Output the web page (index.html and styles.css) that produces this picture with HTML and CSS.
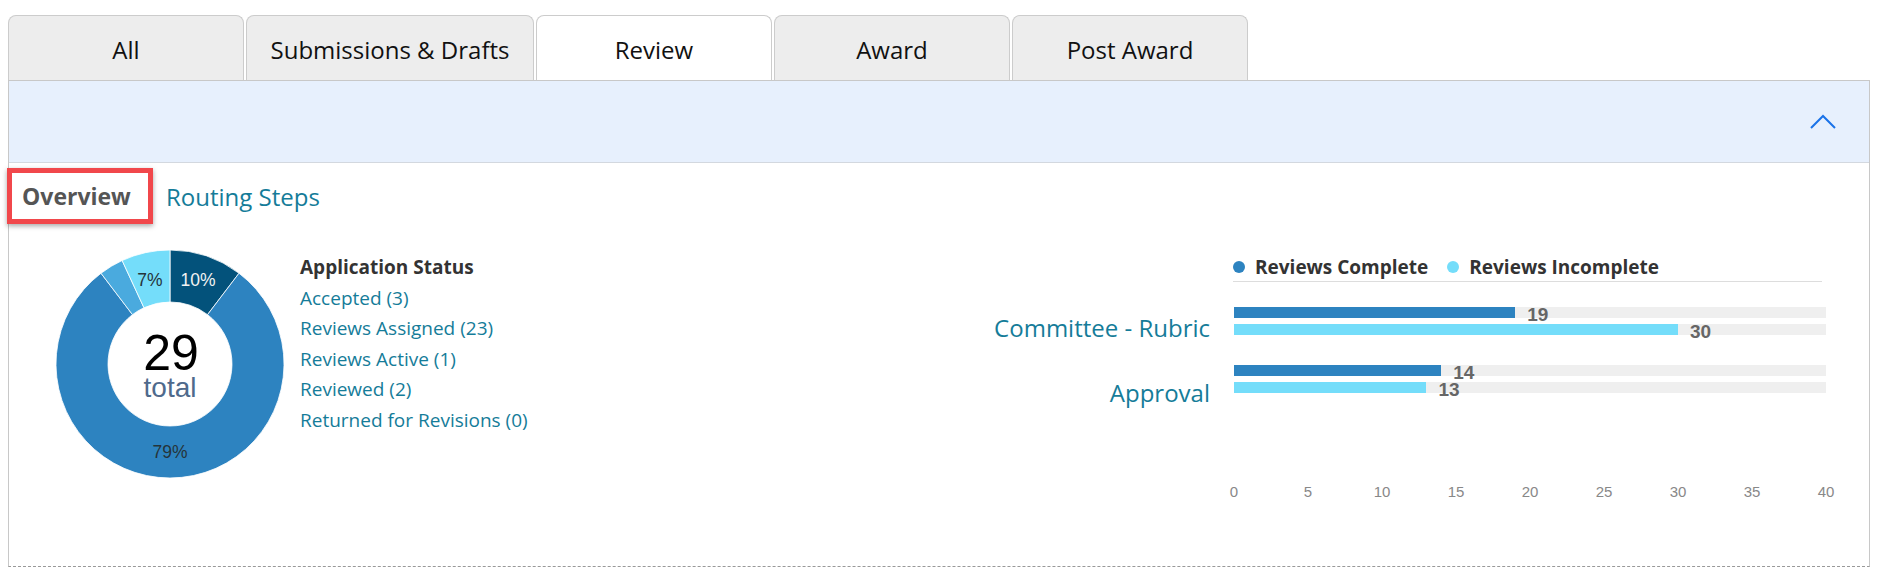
FILE: index.html
```html
<!DOCTYPE html>
<html lang="en">
<head>
<meta charset="utf-8">
<title>Review Overview</title>
<link rel="stylesheet" href="styles.css">
</head>
<body>
<div class="page">
  <nav class="tabs">
    <div class="tab">All</div>
    <div class="tab tab-wide">Submissions &amp; Drafts</div>
    <div class="tab tab-active">Review</div>
    <div class="tab">Award</div>
    <div class="tab">Post Award</div>
  </nav>
  <section class="panel">
    <header class="panel-head">
      <span class="collapse">
        <svg width="26" height="15" viewBox="0 0 26 15"><polyline points="1,14 13,2 25,14" fill="none" stroke="#1a73e8" stroke-width="2"/></svg>
      </span>
    </header>
    <div class="panel-body">
      <div class="subnav">
        <span class="subtab subtab-active">Overview</span>
        <span class="subtab">Routing Steps</span>
      </div>
      <div class="overview">
        <div class="donut">
          <svg width="228" height="228" viewBox="0 0 228 228">
            <g stroke="#ffffff" stroke-width="0.8">
              <path fill="#03527b" d="M114,0 A114,114 0 0 1 183.0,23.24 L151.52,64.64 A62,62 0 0 0 114,52 Z"/>
              <path fill="#2d83c0" d="M183.0,23.24 A114,114 0 1 1 45.0,23.24 L76.48,64.64 A62,62 0 1 0 151.52,64.64 Z"/>
              <path fill="#4aaade" d="M45.0,23.24 A114,114 0 0 1 66.13,10.53 L87.97,57.73 A62,62 0 0 0 76.48,64.64 Z"/>
              <path fill="#74ddfa" d="M66.13,10.53 A114,114 0 0 1 114,0 L114,52 A62,62 0 0 0 87.97,57.73 Z"/>
            </g>
            <text class="slice-label slice-light" x="142" y="36" text-anchor="middle">10%</text>
            <text class="slice-label" x="94" y="36" text-anchor="middle">7%</text>
            <text class="slice-label" x="114" y="208" text-anchor="middle">79%</text>
            <text class="donut-total" x="115" y="120" text-anchor="middle">29</text>
            <text class="donut-caption" x="114" y="147" text-anchor="middle">total</text>
          </svg>
        </div>
        <div class="status">
          <div class="status-title">Application Status</div>
          <a class="status-item">Accepted (3)</a>
          <a class="status-item">Reviews Assigned (23)</a>
          <a class="status-item">Reviews Active (1)</a>
          <a class="status-item">Reviewed (2)</a>
          <a class="status-item">Returned for Revisions (0)</a>
        </div>
        <div class="bar-chart">
          <div class="legend">
            <span class="legend-item"><span class="dot dot-complete"></span>Reviews Complete</span>
            <span class="legend-item"><span class="dot dot-incomplete"></span>Reviews Incomplete</span>
          </div>
          <div class="cat-labels">
            <div class="cat">Committee - Rubric</div>
            <div class="cat cat-second">Approval</div>
          </div>
          <div class="plot">
            <div class="group">
              <div class="track"><div class="fill fill-complete" style="--v:47.5%"></div><span class="value" style="--v:47.5%">19</span></div>
              <div class="track"><div class="fill fill-incomplete" style="--v:75%"></div><span class="value" style="--v:75%">30</span></div>
            </div>
            <div class="group">
              <div class="track"><div class="fill fill-complete" style="--v:35%"></div><span class="value" style="--v:35%">14</span></div>
              <div class="track"><div class="fill fill-incomplete" style="--v:32.5%"></div><span class="value" style="--v:32.5%">13</span></div>
            </div>
          </div>
          <div class="axis">
            <span class="tick">0</span><span class="tick">5</span><span class="tick">10</span><span class="tick">15</span><span class="tick">20</span><span class="tick">25</span><span class="tick">30</span><span class="tick">35</span><span class="tick">40</span>
          </div>
        </div>
      </div>
    </div>
  </section>
</div>
</body>
</html>
```
FILE: styles.css
```css
* { box-sizing: border-box; }
html, body { margin: 0; padding: 0; background: #ffffff; }
body { font-family: "Open Sans", "Noto Sans", sans-serif; color: #222; }

.page { padding: 15px 13px 0 8px; }

.tabs { display: flex; gap: 2px; }
.tab {
  width: 236px;
  height: 65px;
  padding-top: 5px;
  line-height: 58px;
  text-align: center;
  font-size: 24px;
  color: #111;
  background: #ededed;
  border: 1px solid #cccccc;
  border-bottom: none;
  border-radius: 8px 8px 0 0;
}
.tab-wide { width: 288px; }
.tab-active { background: #ffffff; }

.panel {
  border: 1px solid #c8c8c8;
  border-bottom: 1px dashed #999999;
}
.panel-head {
  height: 82px;
  background: #e7f0fd;
  border-bottom: 1px solid #d3d8df;
  display: flex;
  justify-content: flex-end;
  align-items: center;
  padding-right: 33px;
}
.collapse { display: flex; }

.panel-body { height: 398px; }

.subnav {
  display: flex;
  align-items: center;
  gap: 13px;
  margin: 5px 0 0 -2px;
}
.subtab { font-size: 24px; color: #157c99; }
.subtab-active {
  width: 146px;
  height: 56px;
  padding-left: 10px;
  display: flex;
  align-items: center;
  font-size: 23px;
  font-weight: 700;
  color: #555555;
  border: 5px solid #f1474b;
  box-shadow: 0 2px 5px rgba(0,0,0,0.35);
}

.overview {
  display: flex;
  align-items: flex-start;
  margin-top: 26px;
}
.donut { margin-left: 47px; width: 228px; height: 228px; }
.donut svg { display: block; }
.slice-label { font-family: "Liberation Sans", Arial, sans-serif; font-size: 17.5px; fill: #25343a; }
.slice-light { fill: #f2f2f2; }
.donut-total { font-family: "Liberation Sans", Arial, sans-serif; font-size: 50px; fill: #000; }
.donut-caption { font-family: "Liberation Sans", Arial, sans-serif; font-size: 28px; fill: #4f6a8c; }

.status {
  margin-left: 16px;
  padding-top: 2px;
  display: flex;
  flex-direction: column;
  font-size: 19px;
  line-height: 30.6px;
}
.status-title { font-weight: 700; color: #333; }
.status-item { color: #157c99; }

.bar-chart {
  margin-left: auto;
  margin-right: 43px;
  display: grid;
  grid-template-columns: 240px 592px;
}
.legend {
  grid-column: 2;
  grid-row: 1;
  margin-left: -1px;
  width: 589px;
  display: flex;
  align-items: center;
  gap: 19px;
  height: 31.6px;
  padding-top: 3px;
  line-height: 26px;
  font-size: 19px;
  font-weight: 700;
  color: #333;
  border-bottom: 1px solid #dddddd;
}
.legend-item { display: flex; align-items: center; gap: 10px; }
.dot { width: 12px; height: 12px; border-radius: 50%; }
.dot-complete { background: #2d83c0; }
.dot-incomplete { background: #74ddfa; }

.cat-labels {
  grid-column: 1;
  grid-row: 2;
  padding: 30px 24px 0 0;
  text-align: right;
}
.cat { font-size: 24px; line-height: 32px; color: #157c99; white-space: nowrap; }
.cat-second { margin-top: 33px; }

.plot {
  grid-column: 2;
  grid-row: 2;
  padding-top: 25px;
  display: flex;
  flex-direction: column;
  gap: 30px;
}
.group { display: flex; flex-direction: column; gap: 6px; }
.track { position: relative; height: 11px; background: #efefef; }
.fill { height: 100%; width: var(--v); }
.fill-complete { background: #2d83c0; }
.fill-incomplete { background: #74ddfa; }
.value {
  position: absolute;
  left: calc(var(--v) + 12px);
  top: -1.5px;
  font-family: "Liberation Sans", Arial, sans-serif;
  font-size: 19px;
  line-height: 19px;
  font-weight: 700;
  color: #666;
}

.axis {
  grid-column: 2;
  grid-row: 3;
  margin-top: 75px;
  display: flex;
  justify-content: space-between;
  font-family: "Liberation Sans", Arial, sans-serif;
  font-size: 15px;
  line-height: 16px;
  color: #888;
}
.tick { width: 0; display: flex; justify-content: center; white-space: nowrap; }
```
